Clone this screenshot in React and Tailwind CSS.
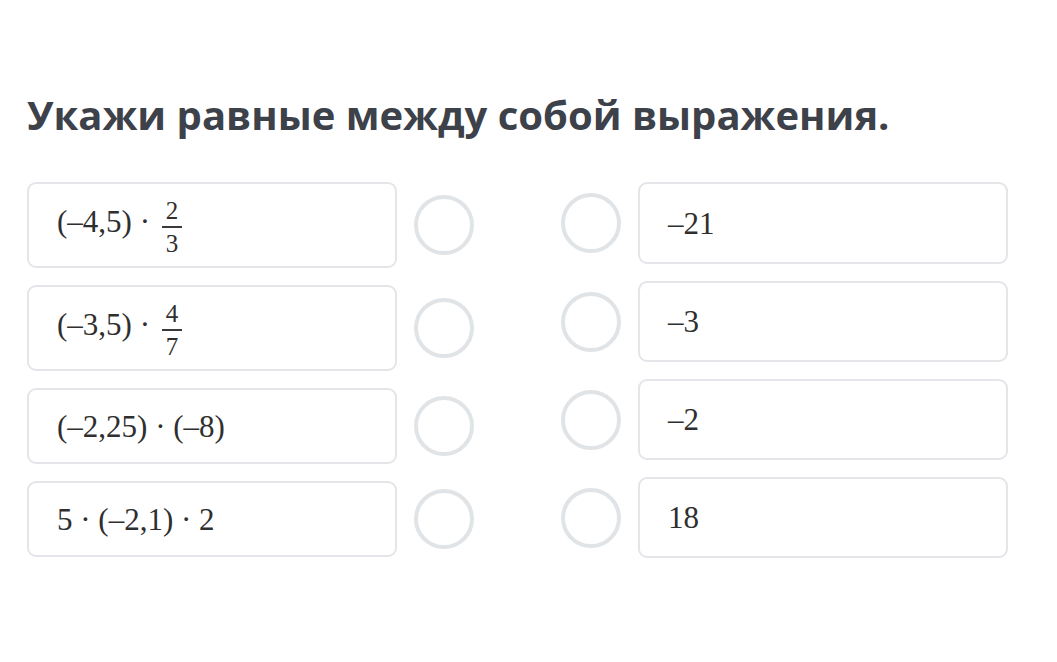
import React from "react";

const serif = { fontFamily: '"Liberation Serif", "Times New Roman", serif' };

function Frac({ n, d }) {
  return (
    <span
      className="inline-flex flex-col items-center align-middle ml-[12px] text-[25px] leading-none relative top-[2px]"
      style={serif}
    >
      <span className="pb-[3px]">{n}</span>
      <span className="w-[20px] h-[1.5px] bg-[#3a3a3a]"></span>
      <span className="pt-[3px]">{d}</span>
    </span>
  );
}

function Circle() {
  return <div className="w-[60px] h-[60px] rounded-full border-[4px] border-[#e1e4e7] bg-white shrink-0" />;
}

function Card({ children, h }) {
  return (
    <div
      className={`w-[370px] ${h} rounded-[9px] border-2 border-[#e3e5e8] bg-white flex items-center pl-[28px] text-[31px] text-[#2f2f2f] leading-none`}
      style={serif}
    >
      <span className="whitespace-nowrap">{children}</span>
    </div>
  );
}

export default function App() {
  const left = [
    { h: "h-[86px]", c: <>(–4,5) ·<Frac n="2" d="3" /></> },
    { h: "h-[86px]", c: <>(–3,5) ·<Frac n="4" d="7" /></> },
    { h: "h-[76px]", c: <>(–2,25) · (–8)</> },
    { h: "h-[76px]", c: <>5 · (–2,1) · 2</> },
  ];
  const right = [
    { h: "h-[82px]", c: "–21" },
    { h: "h-[81px]", c: "–3" },
    { h: "h-[81px]", c: "–2" },
    { h: "h-[81px]", c: "18" },
  ];
  return (
    <div className="w-[1057px] h-[662px] bg-white overflow-hidden pl-[27px] pt-[95px]">
      <h1
        className="text-[40px] leading-none font-bold text-[#3d4149] whitespace-nowrap"
        style={{ fontFamily: '"Open Sans", sans-serif' }}
      >
        Укажи равные между собой выражения.
      </h1>
      <div className="flex mt-[47px] gap-[87px]">
        <div className="flex flex-col gap-[17px]">
          {left.map((r, i) => (
            <div key={i} className="flex items-center gap-[17px]">
              <Card h={r.h}>{r.c}</Card>
              <Circle />
            </div>
          ))}
        </div>
        <div className="flex flex-col gap-[17px]">
          {right.map((r, i) => (
            <div key={i} className="flex items-center gap-[17px]">
              <Circle />
              <Card h={r.h}>{r.c}</Card>
            </div>
          ))}
        </div>
      </div>
    </div>
  );
}
